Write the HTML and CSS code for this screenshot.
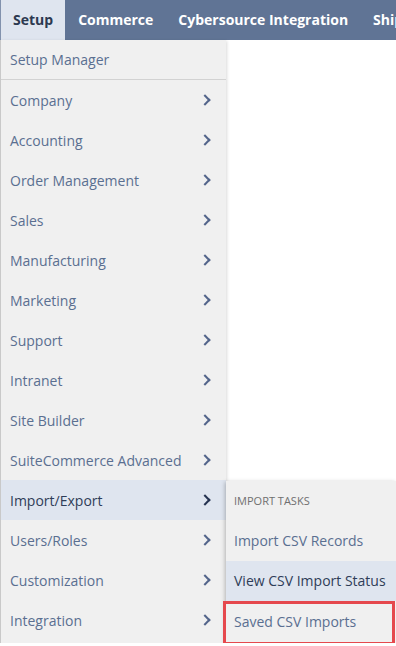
FILE: index.html
```html
<!DOCTYPE html>
<html lang="en">
  <head>
    <meta charset="utf-8">
    <title>Setup Menu</title>
    <link rel="stylesheet" href="styles.css">
  </head>
  <body>
    <div class="navbar">
      <div class="tab active">Setup</div>
      <div class="tab">Commerce</div>
      <div class="tab">Cybersource Integration</div>
      <div class="tab">Shipping</div>
    </div>
    <div class="dropdown">
      <ul class="menu">
        <li class="item first">Setup Manager</li>
        <li class="item">Company <span class="chev"></span></li>
        <li class="item">Accounting <span class="chev"></span></li>
        <li class="item">Order Management <span class="chev"></span></li>
        <li class="item">Sales <span class="chev"></span></li>
        <li class="item">Manufacturing <span class="chev"></span></li>
        <li class="item">Marketing <span class="chev"></span></li>
        <li class="item">Support <span class="chev"></span></li>
        <li class="item">Intranet <span class="chev"></span></li>
        <li class="item">Site Builder <span class="chev"></span></li>
        <li class="item">SuiteCommerce Advanced <span class="chev"></span></li>
        <li class="item open">Import/Export <span class="chev"></span></li>
        <li class="item">Users/Roles <span class="chev"></span></li>
        <li class="item">Customization <span class="chev"></span></li>
        <li class="item">Integration <span class="chev"></span></li>
      </ul>
      <!-- flyout for Import/Export -->
      <ul class="submenu">
        <li class="sub-head">IMPORT TASKS</li>
        <li class="sub-item">Import CSV Records</li>
        <li class="sub-item hover">View CSV Import Status</li>
        <li class="sub-item marked">Saved CSV Imports</li>
      </ul>
    </div>
  </body>
</html>
```
FILE: styles.css
```css
/* page */
body {
  margin: 0;
  font-family: "Open Sans", "Liberation Sans", sans-serif;
  background: #fff;
  overflow: hidden;
}
ul {
  list-style: none;
  margin: 0;
  padding: 0;
}

/* top bar */
.navbar {
  display: flex;
  height: 40px;
  background: #607495;
  white-space: nowrap;
}
.tab {
  padding: 0 12px 0 13px;
  line-height: 40px;
  font-size: 14px;
  font-weight: 700;
  color: #fff;
}
.tab.active {
  background: #dfe5ef;
  color: #2c3950;
  border-left: 1px solid #8292ad;
  padding-left: 12px;
}

/* dropdown */
.dropdown {
  position: relative;
}
.menu {
  width: 225px;
  padding-bottom: 3px;
  background: #f0f0f0;
  border-left: 1px solid #c9c9c9;
  box-shadow: 1px 1px 3px rgba(0, 0, 0, 0.15);
}
.item {
  display: flex;
  align-items: center;
  justify-content: space-between;
  height: 40px;
  padding: 0 17px 0 9px;
  font-size: 14px;
  color: #5a6f91;
}
.item.first {
  border-bottom: 1px solid #d2d2d2;
  height: 39px;
}
.item.open {
  background: #dfe5ef;
  color: #2f3d58;
}
.chev {
  width: 6px;
  height: 6px;
  border-top: 2px solid #52648a;
  border-right: 2px solid #52648a;
  transform: rotate(45deg);
}
.item.open .chev {
  border-color: #243250;
}

/* flyout */
.submenu {
  position: absolute;
  left: 226px;
  top: 441px;
  width: 170px;
  background: #f0f0f0;
  box-shadow: -1px 1px 4px rgba(0, 0, 0, 0.25);
}
.sub-head {
  height: 40px;
  line-height: 40px;
  padding-left: 8px;
  font-size: 11px;
  color: #6f6f6f;
}
.sub-item {
  height: 40px;
  line-height: 40px;
  padding-left: 8px;
  font-size: 14px;
  color: #5a6f91;
  white-space: nowrap;
}
.sub-item.hover {
  background: #dfe5ef;
  color: #2f3d58;
}
.sub-item.marked {
  box-sizing: border-box;
  width: 172px;
  height: 44px;
  margin-left: -3px;
  padding-left: 8px;
  line-height: 36px;
  border: 3px solid #e5484d;
}
```
